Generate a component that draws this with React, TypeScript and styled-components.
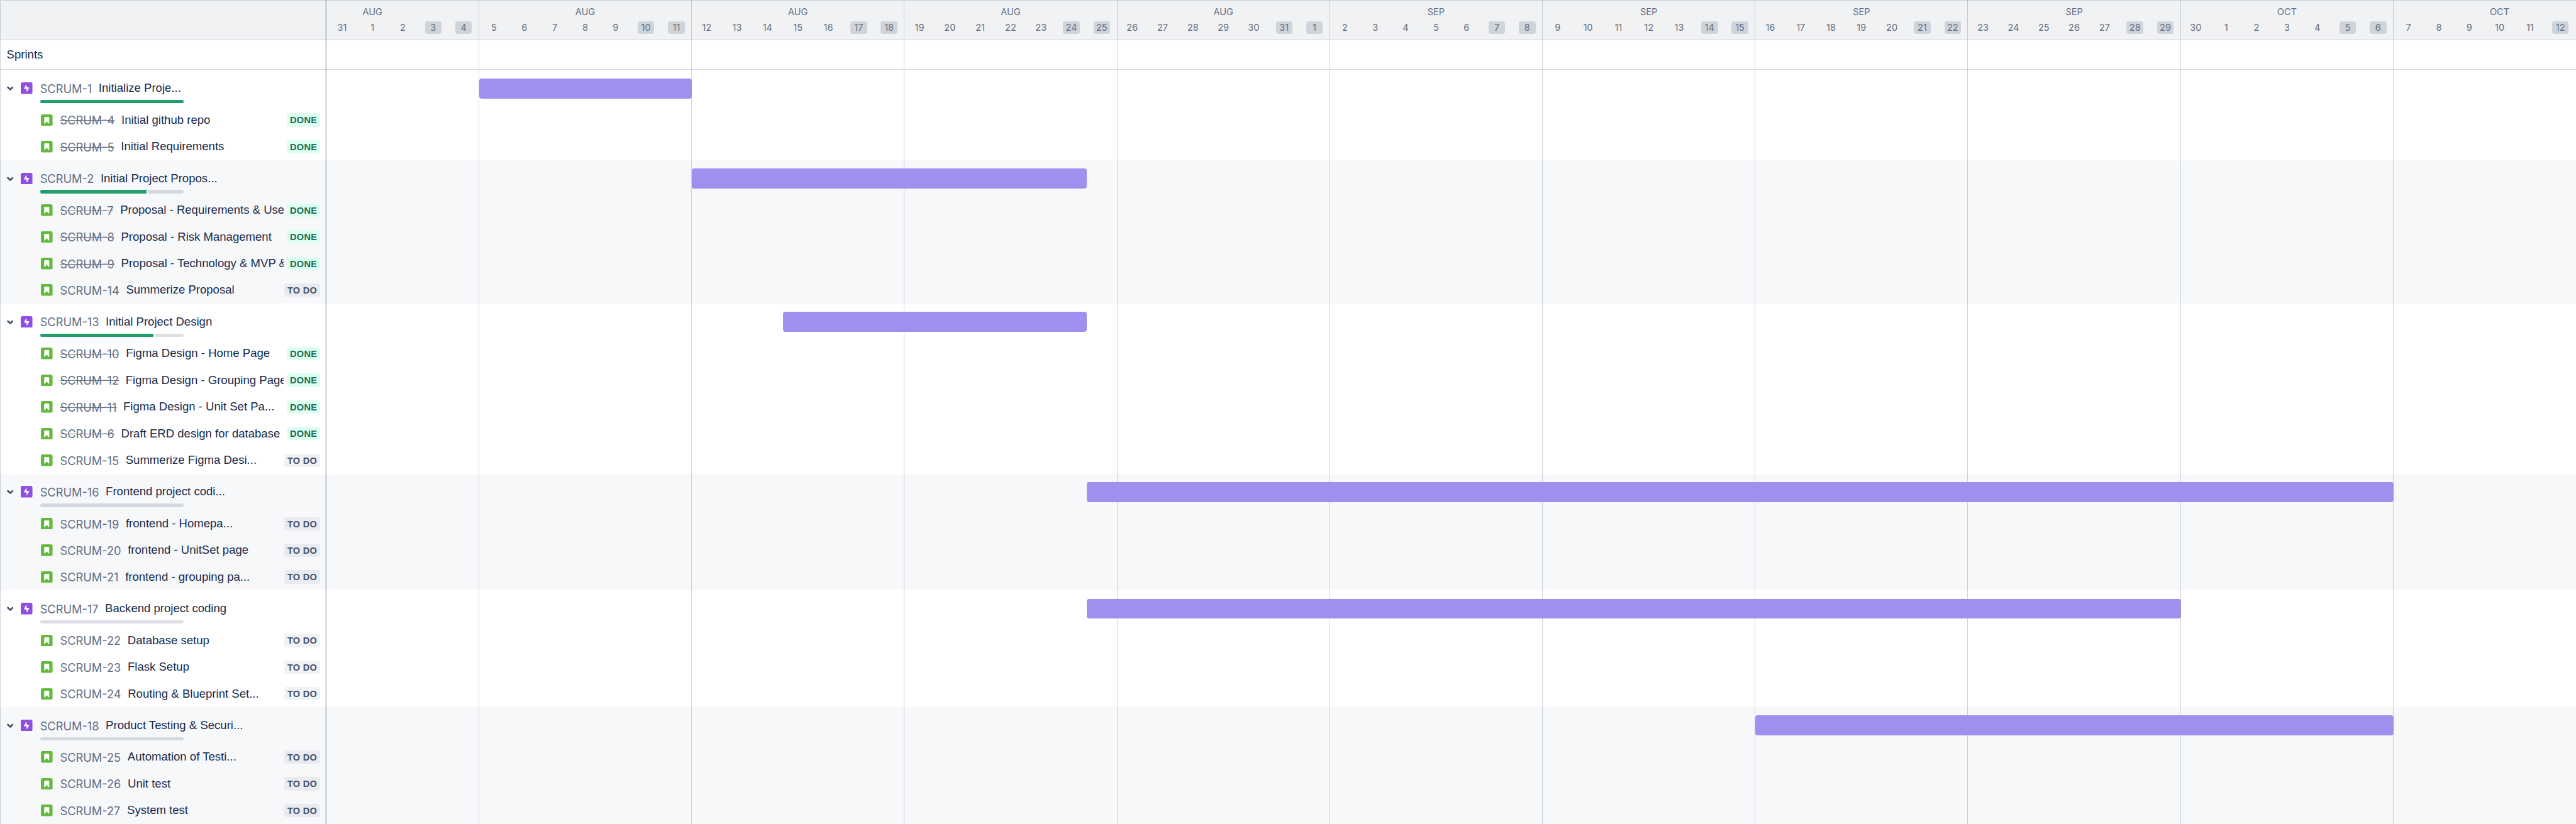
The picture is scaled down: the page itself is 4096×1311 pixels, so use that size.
import React from 'react';
import styled, { createGlobalStyle } from 'styled-components';

const SCALE = 4096 / 6176;
const ROW_SCALE = 1311 / 1976;
const u = (n: number) => `${+(n * SCALE).toFixed(3)}px`;
const v = (n: number) => `${+(n * ROW_SCALE).toFixed(3)}px`;

const WEEK = 510;
const DAY = WEEK / 7;
const SIDEBAR = 784;
const FIRST_WEEK = 364;

const color = {
  text: '#172b4d',
  subtle: '#626f86',
  icon: '#44546f',
  line: 'rgba(9, 30, 66, 0.14)',
  weekLine: 'rgba(9, 30, 66, 0.18)',
  headerLine: '#cad0d8',
  header: '#f1f2f4',
  stripe: '#f7f8fa',
  bar: '#9f8fef',
  done: '#22a06b',
};

const GlobalStyle = createGlobalStyle`
  html, body { margin: 0; padding: 0; background: #fff; overflow: hidden; }
  *, *::before, *::after { box-sizing: border-box; }
`;

const Board = styled.div`
  position: relative;
  width: 4096px;
  height: 1311px;
  overflow: hidden;
  background: #fff;
  color: ${color.text};
  font-family: 'Liberation Sans', Arial, sans-serif;
  font-size: ${u(28)};
`;

const Header = styled.header`
  display: flex;
  height: ${v(96)};
  background: ${color.header};
  border: 1px solid ${color.headerLine};
  border-width: 1px 0;
  border-top-left-radius: ${u(6)};
`;

const HeaderSpacer = styled.div`
  flex: none;
  width: ${u(SIDEBAR)};
`;

const Calendar = styled.div`
  flex: 1;
  min-width: 0;
  display: flex;
  overflow: hidden;
`;

const Week = styled.div<{ $first?: boolean }>`
  flex: none;
  width: ${u(WEEK)};
  margin-left: ${(p) => (p.$first ? u(FIRST_WEEK - WEEK) : 0)};
  padding-top: ${u(11.5)};
  color: ${color.subtle};
  font-family: Inter, sans-serif;
  font-size: ${u(22)};
`;

const Month = styled.div`
  height: ${u(32)};
  line-height: ${u(32)};
  text-align: center;
`;

const Days = styled.div`
  display: flex;
  padding-top: ${u(7)};
`;

const DayCell = styled.div`
  flex: 1;
  display: flex;
  justify-content: center;
`;

const DayLabel = styled.span<{ $weekend: boolean }>`
  width: ${u(40)};
  height: ${u(30)};
  padding-top: ${u(1.5)};
  border-radius: ${u(6)};
  background: ${(p) => (p.$weekend ? '#cfd4db' : 'transparent')};
  line-height: ${u(30)};
  text-align: center;
`;

const SprintsRow = styled.div`
  display: flex;
  align-items: center;
  height: ${v(72)};
  padding-left: ${u(16)};
  border-bottom: 1px solid #d7dbe0;
`;

const Group = styled.section<{ $striped: boolean }>`
  display: flex;
  background: ${(p) => (p.$striped ? color.stripe : '#fff')};
`;

const IssueList = styled.div`
  flex: none;
  width: ${u(SIDEBAR)};
`;

const EpicRow = styled.div`
  height: ${v(88)};
  padding: ${u(26)} 0 0 ${u(16)};
`;

const EpicLine = styled.div`
  display: flex;
  align-items: center;
  height: ${u(36)};
`;

const ChildRow = styled.div`
  display: flex;
  align-items: center;
  height: ${v(64)};
  padding: 0 ${u(16)} 0 ${u(98)};
`;

const Chevron = styled.svg`
  flex: none;
  width: ${u(16)};
  height: ${u(16)};
  margin-right: ${u(18)};
`;

const TypeIcon = styled.svg`
  flex: none;
  width: ${u(28)};
  height: ${u(28)};
  margin-right: ${u(18)};
`;

const Key = styled.span<{ $done?: boolean }>`
  flex: none;
  position: relative;
  top: ${u(1)};
  margin-right: ${u(16)};
  color: ${color.subtle};
  font-family: Inter, sans-serif;
  font-size: ${u(27.5)};
  line-height: ${u(40)};
  white-space: nowrap;
  text-decoration: ${(p) => (p.$done ? 'line-through' : 'none')};
`;

const Title = styled.span`
  flex: 1;
  min-width: 0;
  overflow: hidden;
  line-height: ${u(40)};
  white-space: nowrap;
`;

const BadgeSlot = styled.div`
  flex: none;
  display: flex;
  justify-content: flex-end;
  width: ${u(88)};
`;

const Badge = styled.span<{ $done: boolean }>`
  width: ${(p) => (p.$done ? u(80.5) : u(87))};
  height: ${u(32)};
  border-radius: ${u(6)};
  background: ${(p) => (p.$done ? '#dcfff1' : 'rgba(9, 30, 66, 0.06)')};
  color: ${(p) => (p.$done ? '#216e4e' : color.icon)};
  font-size: ${u(22)};
  font-weight: 700;
  letter-spacing: ${u(0.4)};
  line-height: ${u(34)};
  text-align: center;
  white-space: nowrap;
`;

const Progress = styled.div`
  display: flex;
  gap: ${u(4)};
  width: ${u(344)};
  height: ${u(8)};
  margin: ${u(10)} 0 0 ${u(80)};
  border-radius: ${u(6)};
  overflow: hidden;
`;

const ProgressPart = styled.div<{ $share: number; $done?: boolean }>`
  flex: ${(p) => p.$share} 1 0;
  background: ${(p) => (p.$done ? color.done : color.line)};
`;

const Lane = styled.div`
  flex: 1;
  min-width: 0;
  padding-top: ${u(20)};
`;

const Bar = styled.div<{ $from: number; $days: number }>`
  position: relative;
  z-index: 2;
  width: ${(p) => u(p.$days * DAY)};
  height: ${u(48)};
  margin-left: ${(p) => u(FIRST_WEEK + 0.6 + p.$from * DAY)};
  border-radius: ${u(6)};
  background: ${color.bar};
`;

const GridOverlay = styled.div`
  position: absolute;
  inset: 0;
  z-index: 1;
  display: flex;
  overflow: hidden;
  pointer-events: none;
`;

const SidebarFrame = styled.div`
  flex: none;
  display: flex;
  justify-content: space-between;
  width: 520px;
`;

const Rule = styled.div<{ $width: number }>`
  width: ${(p) => p.$width}px;
  background: ${(p) => (p.$width > 1 ? color.line : color.weekLine)};
`;

const GridWeek = styled.div<{ $width: number }>`
  flex: none;
  width: ${(p) => u(p.$width)};
  border-right: 1px solid ${color.weekLine};
`;

type Issue = { key: string; title: string; done?: boolean };
type Epic = {
  key: string;
  title: string;
  from: number;
  days: number;
  issues: Issue[];
};

const epics: Epic[] = [
  {
    key: 'SCRUM-1', title: 'Initialize Proje...', from: 0, days: 7,
    issues: [
      { key: 'SCRUM-4', title: 'Initial github repo', done: true },
      { key: 'SCRUM-5', title: 'Initial Requirements', done: true },
    ],
  },
  {
    key: 'SCRUM-2', title: 'Initial Project Propos...', from: 7, days: 13,
    issues: [
      { key: 'SCRUM-7', title: 'Proposal - Requirements & Use', done: true },
      { key: 'SCRUM-8', title: 'Proposal - Risk Management', done: true },
      { key: 'SCRUM-9', title: 'Proposal - Technology & MVP &', done: true },
      { key: 'SCRUM-14', title: 'Summerize Proposal' },
    ],
  },
  {
    key: 'SCRUM-13', title: 'Initial Project Design', from: 10, days: 10,
    issues: [
      { key: 'SCRUM-10', title: 'Figma Design - Home Page', done: true },
      { key: 'SCRUM-12', title: 'Figma Design - Grouping Page', done: true },
      { key: 'SCRUM-11', title: 'Figma Design - Unit Set Pa...', done: true },
      { key: 'SCRUM-6', title: 'Draft ERD design for database', done: true },
      { key: 'SCRUM-15', title: 'Summerize Figma Desi...' },
    ],
  },
  {
    key: 'SCRUM-16', title: 'Frontend project codi...', from: 20, days: 43,
    issues: [
      { key: 'SCRUM-19', title: 'frontend - Homepa...' },
      { key: 'SCRUM-20', title: 'frontend - UnitSet page' },
      { key: 'SCRUM-21', title: 'frontend - grouping pa...' },
    ],
  },
  {
    key: 'SCRUM-17', title: 'Backend project coding', from: 20, days: 36,
    issues: [
      { key: 'SCRUM-22', title: 'Database setup' },
      { key: 'SCRUM-23', title: 'Flask Setup' },
      { key: 'SCRUM-24', title: 'Routing & Blueprint Set...' },
    ],
  },
  {
    key: 'SCRUM-18', title: 'Product Testing & Securi...', from: 42, days: 21,
    issues: [
      { key: 'SCRUM-25', title: 'Automation of Testi...' },
      { key: 'SCRUM-26', title: 'Unit test' },
      { key: 'SCRUM-27', title: 'System test' },
    ],
  },
];

const weeks: { month: string; days: (number | null)[] }[] = [
  { month: 'AUG', days: [null, null, 31, 1, 2, 3, 4] },
  { month: 'AUG', days: [5, 6, 7, 8, 9, 10, 11] },
  { month: 'AUG', days: [12, 13, 14, 15, 16, 17, 18] },
  { month: 'AUG', days: [19, 20, 21, 22, 23, 24, 25] },
  { month: 'AUG', days: [26, 27, 28, 29, 30, 31, 1] },
  { month: 'SEP', days: [2, 3, 4, 5, 6, 7, 8] },
  { month: 'SEP', days: [9, 10, 11, 12, 13, 14, 15] },
  { month: 'SEP', days: [16, 17, 18, 19, 20, 21, 22] },
  { month: 'SEP', days: [23, 24, 25, 26, 27, 28, 29] },
  { month: 'OCT', days: [30, 1, 2, 3, 4, 5, 6] },
  { month: 'OCT', days: [7, 8, 9, 10, 11, 12, null] },
];

const EpicIcon = () => (
  <TypeIcon viewBox="1 1 14 14">
    <rect x="1" y="1" width="14" height="14" rx="2" fill="#904ee2" />
    <path
      transform="translate(5 4)"
      fill="#fff"
      d="M5.923 3.757L5.921 3.753C5.967 3.678 6 3.595 6 3.5C6 3.224 5.776 3 5.5 3L3 3L3 .5C3 .224 2.776 0 2.5 0C2.328 0 2.185.092 2.095.223C2.067.264 2.044.306 2.029.353L.081 4.237C.035 4.313 0 4.399 0 4.5C0 4.776.224 5 .5 5L3 5L3 7.5C3 7.776 3.224 8 3.5 8C3.679 8 3.829 7.901 3.918 7.759L3.934 7.736C3.945 7.715 3.957 7.696 3.965 7.673Z"
    />
  </TypeIcon>
);

const StoryIcon = () => (
  <TypeIcon viewBox="1 1 14 14">
    <rect x="1" y="1" width="14" height="14" rx="2" fill="#63ba3c" />
    <path
      transform="translate(1 1)"
      fill="#fff"
      d="M9 3L5 3C4.448 3 4 3.448 4 4L4 10.5C4 10.776 4.224 11 4.5 11C4.675 11 4.821 10.905 4.91 10.769L6.84 8.54C6.92 8.434 7.08 8.434 7.16 8.54L9.09 10.769C9.179 10.905 9.325 11 9.5 11C9.776 11 10 10.776 10 10.5L10 4C10 3.448 9.552 3 9 3"
    />
  </TypeIcon>
);

const ChevronIcon = () => (
  <Chevron viewBox="0 0 16 16">
    <path d="M2.4 5.9L8 11.2L13.6 5.9" fill="none" stroke={color.icon} strokeWidth="4.2" strokeLinecap="round" strokeLinejoin="round" />
  </Chevron>
);

function EpicGroup({ epic, striped }: { epic: Epic; striped: boolean }) {
  const done = epic.issues.filter((i) => i.done).length;
  const open = epic.issues.length - done;
  return (
    <Group $striped={striped}>
      <IssueList>
        <EpicRow>
          <EpicLine>
            <ChevronIcon />
            <EpicIcon />
            <Key>{epic.key}</Key>
            <Title>{epic.title}</Title>
          </EpicLine>
          <Progress>
            {done > 0 && <ProgressPart $share={done} $done />}
            {open > 0 && <ProgressPart $share={open} />}
          </Progress>
        </EpicRow>
        {epic.issues.map((issue) => (
          <ChildRow key={issue.key}>
            <StoryIcon />
            <Key $done={issue.done}>{issue.key}</Key>
            <Title>{issue.title}</Title>
            <BadgeSlot>
              <Badge $done={!!issue.done}>{issue.done ? 'DONE' : 'TO DO'}</Badge>
            </BadgeSlot>
          </ChildRow>
        ))}
      </IssueList>
      <Lane>
        <Bar $from={epic.from} $days={epic.days} />
      </Lane>
    </Group>
  );
}

export default function App() {
  return (
    <>
      <GlobalStyle />
      <Board>
        <Header>
          <HeaderSpacer />
          <Calendar>
            {weeks.map((week, w) => (
              <Week key={w} $first={w === 0}>
                <Month>{week.month}</Month>
                <Days>
                  {week.days.map((day, d) => (
                    <DayCell key={d}>
                      {day !== null && <DayLabel $weekend={d > 4}>{day}</DayLabel>}
                    </DayCell>
                  ))}
                </Days>
              </Week>
            ))}
          </Calendar>
        </Header>
        <SprintsRow>Sprints</SprintsRow>
        {epics.map((epic, i) => (
          <EpicGroup key={epic.key} epic={epic} striped={i % 2 === 1} />
        ))}
        <GridOverlay>
          <SidebarFrame>
            <Rule $width={1} />
            <Rule $width={3} />
          </SidebarFrame>
          {weeks.map((_, w) => (
            <GridWeek key={w} $width={w === 0 ? FIRST_WEEK + 0.6 : WEEK} />
          ))}
        </GridOverlay>
      </Board>
    </>
  );
}
